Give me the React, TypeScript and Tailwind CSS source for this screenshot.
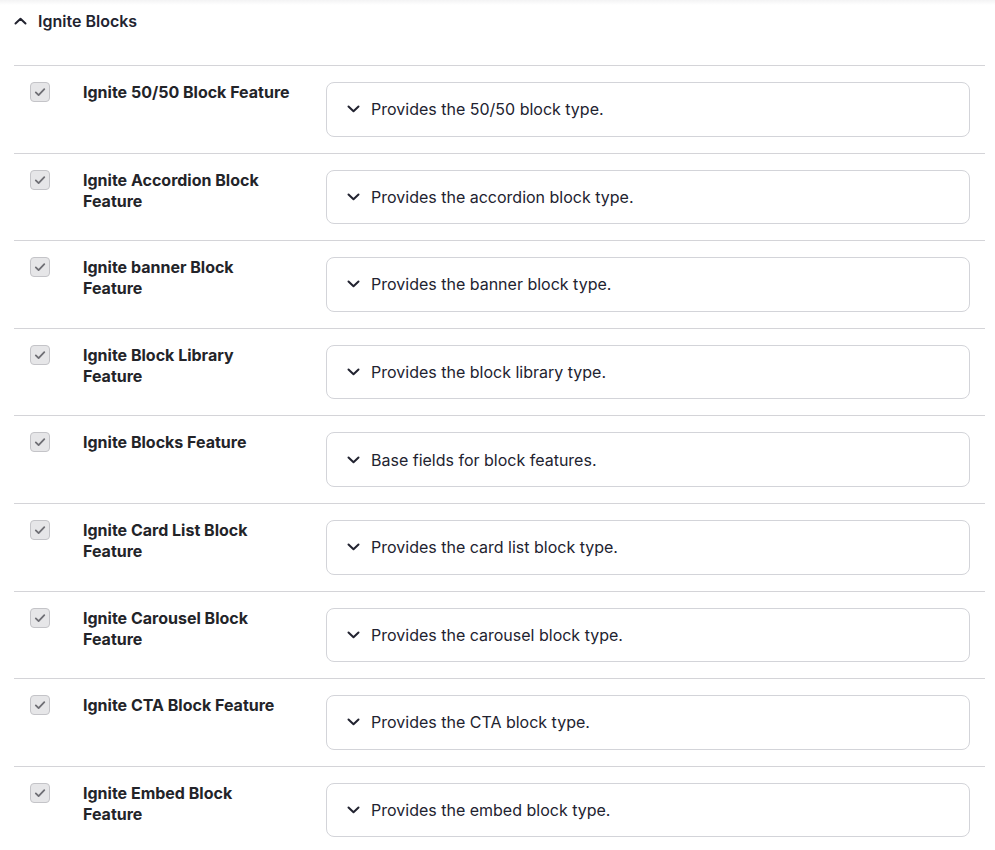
import React from 'react';

const features = [
  { title: 'Ignite 50/50 Block Feature', desc: 'Provides the 50/50 block type.' },
  { title: 'Ignite Accordion Block Feature', desc: 'Provides the accordion block type.' },
  { title: 'Ignite banner Block Feature', desc: 'Provides the banner block type.' },
  { title: 'Ignite Block Library Feature', desc: 'Provides the block library type.' },
  { title: 'Ignite Blocks Feature', desc: 'Base fields for block features.' },
  { title: 'Ignite Card List Block Feature', desc: 'Provides the card list block type.' },
  { title: 'Ignite Carousel Block Feature', desc: 'Provides the carousel block type.' },
  { title: 'Ignite CTA Block Feature', desc: 'Provides the CTA block type.' },
  { title: 'Ignite Embed Block Feature', desc: 'Provides the embed block type.' },
];

const Chevron = ({ up = false }: { up?: boolean }) => (
  <svg width="13" height="8" viewBox="0 0 13 8" fill="none" className={up ? 'rotate-180' : ''}>
    <path d="M1.5 1.5L6.5 6.3L11.5 1.5" stroke="#222330" strokeWidth="2" strokeLinecap="round" strokeLinejoin="round" />
  </svg>
);

const Checkbox = () => (
  <div className="w-5 h-5 rounded-[4px] border border-[#c4c4c8] bg-[#e6e6e8] flex items-center justify-center">
    <svg width="12" height="12" viewBox="0 0 12 12" fill="none">
      <path d="M1.8 6.4l2.8 2.7L10.3 3.2" stroke="#6f6f75" strokeWidth="1.8" strokeLinecap="round" strokeLinejoin="round" />
    </svg>
  </div>
);

const FeatureRow = ({ title, desc }: { title: string; desc: string }) => (
  <div className="flex items-start border-t border-[#d4d4d8] py-4">
    <div className="w-[69px] shrink-0 pl-4">
      <Checkbox />
    </div>
    <div className="w-[243px] shrink-0 pr-[33px] text-[16px] leading-[21px] font-bold text-[#232429]">
      {title}
    </div>
    <div className="flex-1 mr-[15px] h-[54.6px] rounded-lg border border-[#d3d4d9] flex items-center pl-[20px] text-[16px] text-[#222330]">
      <span className="mr-[11px] flex"><Chevron /></span>
      <span>{desc}</span>
    </div>
  </div>
);

export default function App() {
  return (
    <div className="min-h-screen bg-white" style={{ fontFamily: 'Inter, "Noto Sans", sans-serif' }}>
      <div className="h-[5px] bg-gradient-to-b from-[#f3f3f4] to-white" />
      <div className="pl-[14px] pr-[10px]">
        <div className="flex items-center h-[32px] text-[16px] font-semibold text-[#222330]">
          <span className="mr-[11px] flex"><Chevron up /></span>
          <span>Ignite Blocks</span>
        </div>
        <div className="mt-[28px]">
          {features.map((f) => (
            <FeatureRow key={f.title} title={f.title} desc={f.desc} />
          ))}
        </div>
      </div>
    </div>
  );
}
